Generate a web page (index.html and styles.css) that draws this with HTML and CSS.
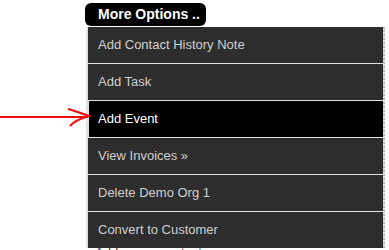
FILE: index.html
```html
<!DOCTYPE html>
<html lang="en">
<head>
<meta charset="UTF-8">
<title>More Options</title>
<link rel="stylesheet" href="styles.css">
</head>
<body>
<div class="page">
    <div class="options">
        <div class="options-btn">More Options ..</div>
        <ul class="menu">
            <li><a href="#">Add Contact History Note</a></li>
            <li><a href="#">Add Task</a></li>
            <li class="active"><a href="#">Add Event</a></li>
            <li><a href="#">View Invoices &raquo;</a></li>
            <li><a href="#">Delete Demo Org 1</a></li>
            <li><a href="#">Convert to Customer</a></li>
        </ul>
        <div class="below">Add a new contact</div>
    </div>
    <!-- red annotation arrow -->
    <svg class="arrow" width="100" height="30" viewBox="0 0 100 30">
        <path d="M0 16 L88 16" stroke="#f01010" stroke-width="2.2" fill="none"/>
        <path d="M68 8 C76 10 83 13 89 15 C82 17 74 20 70 25" stroke="#f01010" stroke-width="2.2" fill="none"/>
    </svg>
</div>
</body>
</html>
```

FILE: styles.css
```css
/* page */
body {
    margin: 0;
    font-family: Arial, "Liberation Sans", sans-serif;
    background: #fff;
}

.page {
    position: relative;
    height: 250px;
    overflow: hidden;
}

.options {
    padding: 3px 0 0 85px;
}

.options-btn {
    width: 95px;
    overflow: hidden;
    white-space: nowrap;
    background: #000;
    color: #fff;
    font-weight: bold;
    font-size: 14px;
    line-height: 23px;
    height: 23px;
    padding: 0 13px;
    border-radius: 6px;
}

.menu {
    list-style: none;
    margin: 1px 0 0 1px;
    padding: 0;
    width: 296px;
    border-left: 1px solid #e2e2e2;
    border-right: 2px dotted #bbb;
    background: #e2e2e2;
}

.menu li {
    height: 36px;
    margin-bottom: 1px;
    background: #2d2d2d;
    margin-left: 1px;
}

.menu li a {
    display: block;
    padding-left: 10px;
    line-height: 36px;
    font-size: 13px;
    color: #cfcfcf;
    text-decoration: none;
}

.menu li.active {
    background: #000;
    margin-left: 2px;
}

.menu li.active a {
    color: #fff;
    padding-left: 9px;
}

.below {
    padding-left: 10px;
    font-size: 13px;
    color: #333;
    margin-top: -4px;
}

.arrow {
    position: absolute;
    left: 0;
    top: 101px;
}
```
